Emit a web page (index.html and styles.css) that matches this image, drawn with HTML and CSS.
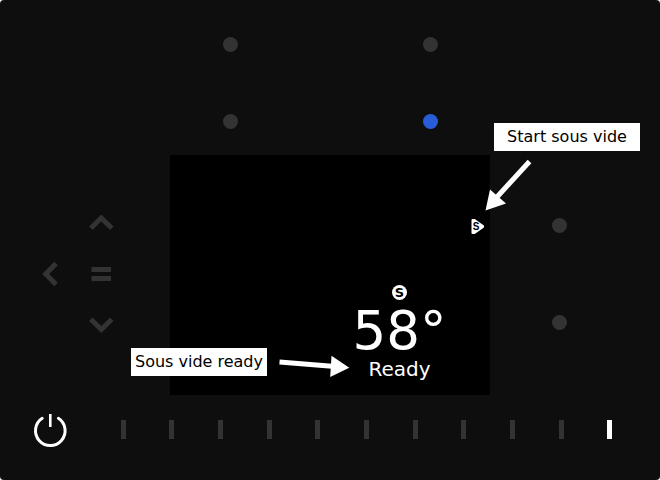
FILE: index.html
```html
<!DOCTYPE html>
<html lang="en">
<head>
<meta charset="utf-8">
<meta name="viewport" content="width=device-width, initial-scale=1.0">
<title>Sous vide ready</title>
<link rel="stylesheet" href="styles.css">
</head>
<body>
<main class="panel">
  <div class="top-keys">
    <button class="key" aria-label="Function 1"><span class="dot"></span></button>
    <button class="key" aria-label="Function 2"><span class="dot"></span></button>
    <button class="key" aria-label="Function 3"><span class="dot"></span></button>
    <button class="key" aria-label="Function 4"><span class="dot active"></span></button>
  </div>

  <nav class="arrow-keys">
    <button class="key up" aria-label="Up">
      <svg width="40" height="40" viewBox="0 0 40 40"><path d="M9.800 25.200L20.300 15 30.800 25.200"/></svg>
    </button>
    <button class="key left" aria-label="Back">
      <svg width="40" height="40" viewBox="0 0 40 40"><path d="M26 9.600L15.700 20 26 30.400"/></svg>
    </button>
    <button class="key equals" aria-label="Menu">
      <svg width="40" height="40" viewBox="0 0 40 40"><path d="M10.500 15.500H30M10.500 24.500H30"/></svg>
    </button>
    <button class="key down" aria-label="Down">
      <svg width="40" height="40" viewBox="0 0 40 40"><path d="M9.800 14.300L20.300 24.500 30.800 14.300"/></svg>
    </button>
  </nav>

  <section class="screen">
    <button class="start" aria-label="Start">
      <svg width="14" height="16" viewBox="0 0 14 16">
        <path d="M1.500 2h2L12 8v1L3.500 15h-2z" fill="#fff" stroke="#fff" stroke-width="2" stroke-linejoin="round"/>
        <text class="start-letter" x="5" y="12">S</text>
      </svg>
    </button>
    <div class="reading">
      <span class="badge">S</span>
      <strong class="temp">58°</strong>
      <span class="status">Ready</span>
    </div>

    <!-- callouts -->
    <p class="callout callout-start">Start sous vide</p>
    <svg class="pointer pointer-start" width="50" height="58" viewBox="0 0 50 58">
      <path d="M46.500 6.500L14 42" stroke="#fff" stroke-width="5"/>
      <path d="M2.500 55.500L7 34.500 23 48.500z" fill="#fff"/>
    </svg>
    <p class="callout callout-ready">Sous vide ready</p>
    <svg class="pointer pointer-ready" width="72" height="24" viewBox="0 0 72 24">
      <path d="M1.500 7L54 11.300" stroke="#fff" stroke-width="5"/>
      <path d="M71.300 12.700L53.500 .800 52.200 22z" fill="#fff"/>
    </svg>
  </section>

  <div class="side-keys">
    <button class="key" aria-label="Start sous vide"><span class="dot"></span></button>
    <button class="key" aria-label="Function 5"><span class="dot"></span></button>
  </div>

  <div class="bottom-bar">
    <button class="key power" aria-label="Power">
      <svg width="40" height="40" viewBox="0 0 40 40">
        <path d="M12.200 8.300a14.800 14.800 0 1 0 16.200 0" fill="none" stroke="#fff" stroke-width="3" stroke-linecap="round"/>
        <path d="M20.300 4v13" stroke="#fff" stroke-width="2.600"/>
      </svg>
    </button>
    <div class="levels">
      <button class="level" aria-label="Level 1"></button>
      <button class="level" aria-label="Level 2"></button>
      <button class="level" aria-label="Level 3"></button>
      <button class="level" aria-label="Level 4"></button>
      <button class="level" aria-label="Level 5"></button>
      <button class="level" aria-label="Level 6"></button>
      <button class="level" aria-label="Level 7"></button>
      <button class="level" aria-label="Level 8"></button>
      <button class="level" aria-label="Level 9"></button>
      <button class="level" aria-label="Level 10"></button>
      <button class="level active" aria-label="Level 11"></button>
    </div>
  </div>
</main>
</body>
</html>
```
FILE: styles.css
```css
:root {
    --panel: #0e0e0e;
    --key: #333;
    --blue: #295cd9;
}
* {
    box-sizing: border-box;
    margin: 0;
    padding: 0;
}
body {
    background: #fff;
    font-family: "DejaVu Sans", sans-serif;
    color: #fff;
}
svg {
    display: block;
}
button {
    border: none;
    background: none;
    color: inherit;
    cursor: pointer;
}
.panel {
    display: grid;
    grid-template-columns: 1fr 320px 1fr;
    grid-template-rows: auto auto 1fr;
    min-height: 100vh;
    background: var(--panel);
    border-radius: 4px;
}
.key {
    display: flex;
    align-items: center;
    justify-content: center;
    width: 40px;
    height: 40px;
}
.dot {
    width: 15px;
    height: 15px;
    border-radius: 50%;
    background: var(--key);
}
.dot.active {
    background: var(--blue);
}
.top-keys {
    grid-column: 1 / -1;
    display: grid;
    grid-template-columns: 40px 40px;
    gap: 37px 160px;
    justify-content: center;
    padding: 24px 0 14px;
}

/* left side */
.arrow-keys {
    display: grid;
    grid-template-columns: 40px 40px;
    grid-template-areas: ". up" "left equals" ". down";
    gap: 11px;
    align-content: start;
    justify-content: end;
    padding: 48px 49px 0 0;
}
.arrow-keys path {
    fill: none;
    stroke: var(--key);
    stroke-width: 5;
}
.up {
    grid-area: up;
}
.left {
    grid-area: left;
}
.equals {
    grid-area: equals;
}
.down {
    grid-area: down;
}

/* display */
.screen {
    position: relative;
    display: flex;
    flex-direction: column;
    align-items: flex-end;
    justify-content: space-between;
    height: 240px;
    padding: 63px 0 14px;
    background: #000;
}
.start {
    margin-right: 5px;
}
.start-letter {
    text-anchor: middle;
    font-size: 10px;
    font-weight: bold;
    fill: #000;
}
.reading {
    display: flex;
    flex-direction: column;
    align-items: center;
    width: 181px;
}
.badge {
    width: 15px;
    height: 15px;
    margin-bottom: 5px;
    border-radius: 50%;
    background: #fff;
    color: #000;
    font-size: 13px;
    font-weight: bold;
    line-height: 15px;
    text-align: center;
}
.temp {
    font-size: 53px;
    font-weight: normal;
    line-height: 52px;
}
.status {
    font-size: 20px;
    line-height: 24px;
}

/* callouts over the panel */
.callout {
    position: absolute;
    height: 28px;
    background: #fff;
    color: #000;
    font-size: 16px;
    line-height: 27px;
    text-align: center;
    white-space: nowrap;
}
.callout-start {
    top: -32px;
    left: 324px;
    width: 146px;
}
.callout-ready {
    top: 193px;
    left: -39px;
    width: 136px;
}
.pointer {
    position: absolute;
}
.pointer-start {
    top: 0;
    left: 313px;
}
.pointer-ready {
    top: 200px;
    left: 108px;
}

.side-keys {
    display: flex;
    flex-direction: column;
    gap: 57px;
    padding: 50px 0 0 49px;
}

/* bottom row */
.bottom-bar {
    grid-column: 1 / -1;
    display: flex;
    align-items: flex-start;
    gap: 43px;
    padding: 15px 40px 30px 30px;
}
.levels {
    flex: 1;
    display: flex;
    justify-content: space-between;
    padding-top: 10px;
}
.level {
    display: flex;
    justify-content: center;
    width: 20px;
    height: 20px;
}
.level::before {
    content: "";
    width: 5px;
    height: 19px;
    background: var(--key);
}
.level.active::before {
    background: #fff;
}
```
